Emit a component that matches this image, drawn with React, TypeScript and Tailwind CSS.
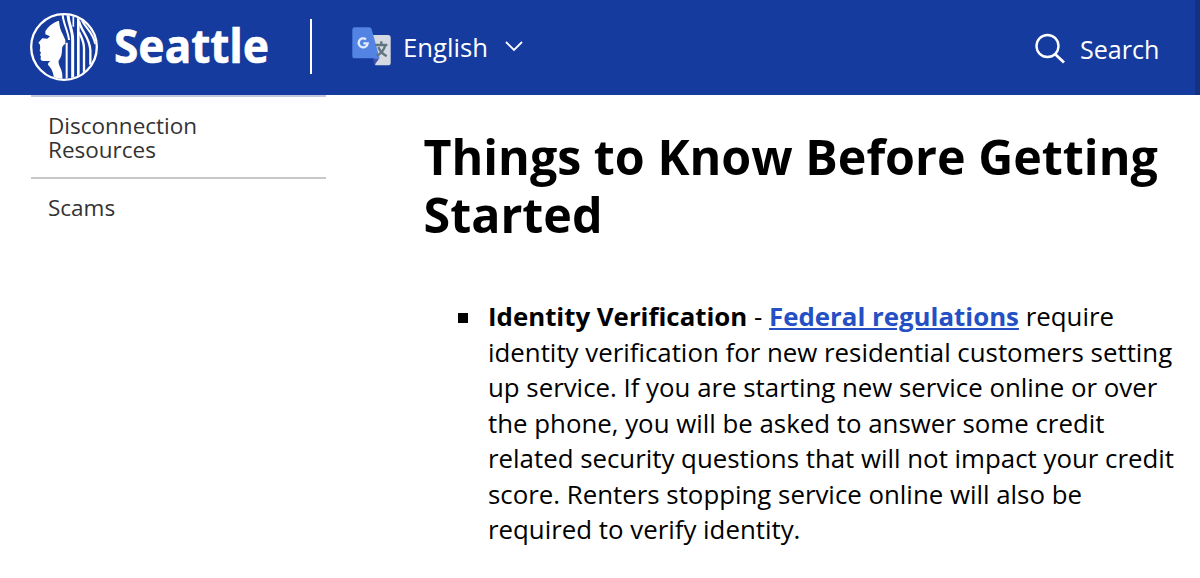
import React from "react";

const SealLogo: React.FC = () => (
  <svg className="h-[68px] w-[68px] shrink-0" viewBox="30 23 204 204" fill="none">
    <defs>
      <clipPath id="seal">
        <circle cx="132" cy="125" r="96" />
      </clipPath>
    </defs>
    <g clipPath="url(#seal)">
      {/* profile */}
      <path
        d="M117 46C118 62 122 76 128 86L136 104V116C130 118 126 124 126 132C126 146 124 156 116 166C114 180 126 190 127 208V230H104L100 208C98 196 92 186 84 178C84 172 88 168 92 167H70C62 167 60 161 63 154L60 148L63 142L59 136C61 128 61 122 59 117L55 112L67 99L82 100L90 93L76 87L76 78C84 64 98 52 117 46Z"
        fill="#fff"
      />
      {/* hair */}
      <g stroke="#fff" strokeWidth="6">
        <path d="M128 28C130 56 144 76 147 104" />
        <path d="M140 112V220" />
        <path d="M144 26C144 54 158 70 158 104V220" strokeWidth="9" />
        <path d="M160 26V64" strokeWidth="5" />
        <path d="M175 28V220" strokeWidth="8" />
        <path d="M177 80C184 96 192 108 192 128V208" strokeWidth="7" />
        <path d="M177 48C186 82 208 94 211 134V178" strokeWidth="7" />
        <path d="M184 42C196 68 218 78 226 116" />
      </g>
    </g>
    <circle cx="132" cy="125" r="98.5" stroke="#fff" strokeWidth="7" />
  </svg>
);

const TranslateIcon: React.FC = () => (
  <svg className="h-[40px] w-[40px] shrink-0" viewBox="0 0 120 120" fill="none">
    <path d="M57 24H108Q116 24 116 32V107Q116 115 108 115H70Z" fill="#d5d9e2" />
    <path d="M63 94H82L67 115Z" fill="#3f51ad" />
    <path d="M8 1H51Q57 1 59 7L83 94H8Q1 94 1 86V8Q1 1 8 1Z" fill="#5384e4" />
    <path d="M42 37A13.500 13.500 0 1 0 47 49H34" stroke="#e4ebfb" strokeWidth="7" />
    <path d="M70 54H106M88 43V54M100 54C96 70 86 80 74 87M79 60C84 74 94 82 104 88" stroke="#607580" strokeWidth="7" />
  </svg>
);

const Header: React.FC = () => (
  <header className="flex h-[95px] bg-[#163b9e] text-white">
    <div className="flex flex-1 items-start pl-[30px]">
      <div className="mt-[13px]">
        <SealLogo />
      </div>
      <div className="mt-[12px] ml-[16px] w-[196px] origin-left scale-x-[0.96] font-['Noto_Sans'] text-[46px] leading-[66px] font-bold [-webkit-text-stroke:0.6px_white]">
        Seattle
      </div>
      <div className="mt-[19px] h-[55px] w-[2px] bg-white" />
      <button className="mt-[27px] ml-[40px] flex items-start">
        <TranslateIcon />
        <span className="mt-px ml-[11px] w-[84px] text-[25.7px] leading-[40px] whitespace-nowrap">English</span>
        <svg className="mt-[13px] ml-[18px] h-[14px] w-[18px]" viewBox="0 0 18 14" fill="none">
          <path d="M1 2L9 10L17 2" stroke="#fff" strokeWidth="1.8" />
        </svg>
      </button>
    </div>
    <button className="mt-[30px] mr-[35px] flex h-[40px] items-start">
      <svg className="mt-[3px] h-[32px] w-[32px]" viewBox="0 0 32 32" fill="none">
        <circle cx="13.500" cy="13" r="11" stroke="#fff" strokeWidth="2.4" />
        <path d="M21 21L30 29.500" stroke="#fff" strokeWidth="2.8" />
      </svg>
      <span className="-mt-px ml-[14px] w-[80px] origin-left scale-x-[0.965] text-[26px] leading-[40px] whitespace-nowrap">
        Search
      </span>
    </button>
    <div className="w-[5px] bg-[#153280]" />
  </header>
);

const Sidebar: React.FC = () => (
  <nav className="w-[295px] shrink-0 text-[22.5px] leading-[24px] text-[#333]">
    <a href="#" className="block h-[84px] border-y-2 border-[#c8c8c8] border-t-[#c3c8dc] pt-[17px] pl-[17px]">
      Disconnection
      <br />
      Resources
    </a>
    <a href="#" className="block pt-[17px] pl-[17px]">
      Scams
    </a>
  </nav>
);

const App: React.FC = () => (
  <div className="h-[578px] w-[1200px] overflow-hidden bg-white font-['Open_Sans','Noto_Sans',sans-serif]">
    <Header />
    <div className="flex pl-[31px]">
      <Sidebar />
      <main className="ml-[97.5px] w-[776px] shrink-0 text-black">
        <h2 className="pt-[32px] text-[48.4px] leading-[58px] font-bold">
          Things to Know Before Getting
          <br />
          Started
        </h2>
        <ul className="mt-[56px]">
          <li className="flex">
            <span className="mt-[14px] ml-[34.5px] h-[10px] w-[10px] shrink-0 bg-black" />
            <p className="ml-[20px] w-[692px] text-[25.83px] leading-[35.5px]">
              <strong className="font-bold">Identity Verification</strong> -{" "}
              <a href="#" className="font-bold text-[#2450c4] underline">
                Federal regulations
              </a>{" "}
              require identity verification for new residential customers setting up service. If you are
              starting new service online or over the phone, you will be asked to answer some credit
              related security questions that will not impact your credit score. Renters stopping service
              online will also be required to verify identity.
            </p>
          </li>
        </ul>
      </main>
    </div>
  </div>
);

export default App;
